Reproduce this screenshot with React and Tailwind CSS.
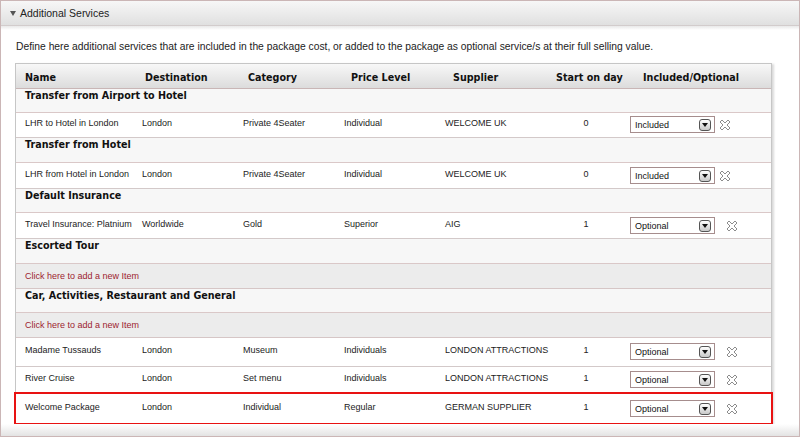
import React from "react";

const rows = [
  { type: "group", title: "Transfer from Airport to Hotel", h: "h-[24px]" },
  { type: "item", name: "LHR to Hotel in London", dest: "London", cat: "Private 4Seater", price: "Individual", supplier: "WELCOME UK", day: "0", mode: "Included", h: "h-[25px]", pt: "pt-[4px]" },
  { type: "group", title: "Transfer from Hotel", h: "h-[25px]" },
  { type: "item", name: "LHR from Hotel in London", dest: "London", cat: "Private 4Seater", price: "Individual", supplier: "WELCOME UK", day: "0", mode: "Included", h: "h-[26px]", pt: "pt-[5px]" },
  { type: "group", title: "Default Insurance", h: "h-[24px]" },
  { type: "item", name: "Travel Insurance: Platnium", dest: "Worldwide", cat: "Gold", price: "Superior", supplier: "AIG", day: "1", mode: "Optional", h: "h-[26px]", pt: "pt-[5px]" },
  { type: "group", title: "Escorted Tour", h: "h-[25px]" },
  { type: "add", h: "h-[25px]" },
  { type: "group", title: "Car, Activities, Restaurant and General", h: "h-[24px]" },
  { type: "add", h: "h-[25px]" },
  { type: "item", name: "Madame Tussauds", dest: "London", cat: "Museum", price: "Individuals", supplier: "LONDON ATTRACTIONS", day: "1", mode: "Optional", h: "h-[29px]", pt: "pt-[6px]" },
  { type: "item", name: "River Cruise", dest: "London", cat: "Set menu", price: "Individuals", supplier: "LONDON ATTRACTIONS", day: "1", mode: "Optional", h: "h-[27px]", pt: "pt-[5px]" },
  { type: "item", name: "Welcome Package", dest: "London", cat: "Individual", price: "Regular", supplier: "GERMAN SUPPLIER", day: "1", mode: "Optional", h: "h-[29px]", pt: "pt-[7px]", last: true },
];

const boldFont = "font-['DejaVu_Sans',Verdana,sans-serif] text-[9.6px] font-bold";

function RemoveIcon() {
  return (
    <svg width="12" height="12" viewBox="0 0 12 12" className="shrink-0">
      <polygon
        points="1,3 3,1 6,4 9,1 11,3 8,6 11,9 9,11 6,8 3,11 1,9 4,6"
        fill="#ffffff"
        stroke="#8c8c8c"
        strokeWidth="1"
        strokeLinejoin="round"
      />
    </svg>
  );
}

function SelectBox({ value }) {
  return (
    <div className="flex h-[17px] w-[85px] shrink-0 items-center justify-between border border-[#a68d8d] bg-white pl-[4px] pr-[3px]">
      <span className="text-[9px] leading-[12px] text-[#111]">{value}</span>
      <span className="flex h-[12px] w-[12px] items-center justify-center rounded-[3px] border border-[#555] bg-gradient-to-b from-white to-[#c8c8c8]">
        <svg width="6" height="4" viewBox="0 0 6 4">
          <polygon points="0,0 6,0 3,4" fill="#111" />
        </svg>
      </span>
    </div>
  );
}

function ItemRow({ row }) {
  return (
    <div
      className={`flex items-start bg-white ${row.h} ${row.pt} ${
        row.last ? "outline-2 outline-[#e81212]" : "border-b border-[#d3c9c9]"
      } text-[9px] leading-[12px] text-[#222]`}
    >
      <div className="w-[126px] shrink-0 whitespace-nowrap pl-[9px]">{row.name}</div>
      <div className="w-[101px] shrink-0">{row.dest}</div>
      <div className="w-[101px] shrink-0">{row.cat}</div>
      <div className="w-[101px] shrink-0">{row.price}</div>
      <div className="w-[110px] shrink-0 whitespace-nowrap">{row.supplier}</div>
      <div className="w-[62px] shrink-0 text-center">{row.day}</div>
      <div className="-mt-[1px] flex flex-1 items-center pl-[13px]">
        <SelectBox value={row.mode} />
        <span className={row.mode === "Included" ? "ml-[4px]" : "ml-[11px]"}>
          <RemoveIcon />
        </span>
      </div>
    </div>
  );
}

export default function App() {
  return (
    <div className="h-[437px] w-[800px] overflow-hidden bg-white font-['Liberation_Sans',Arial,sans-serif]">
      <div className="flex h-full flex-col border border-[#cbb6b6]">
        {/* Panel header */}
        <div className="flex h-[25px] shrink-0 items-center border-b border-[#d2cccc] bg-gradient-to-b from-[#f7f7f7] to-[#e0e0e0] pl-[9px] pt-[1px]">
          <svg width="6" height="5" viewBox="0 0 6 5" className="mr-[4px]">
            <polygon points="0,0 6,0 3,5" fill="#555" />
          </svg>
          <span className="text-[10.5px] text-[#222]">Additional Services</span>
        </div>
        <div className="h-[4px] shrink-0 bg-gradient-to-b from-[#e9e9e9] to-white" />

        <p className="mt-[10px] pl-[15px] text-[10.3px] leading-[14px] text-[#222]">
          Define here additional services that are included in the package cost, or added to the package as optional service/s at their full selling value.
        </p>

        {/* Services table */}
        <div className="ml-[14px] mt-[9px] w-[757px] shrink-0 border border-[#c6c6c6] shadow-[2px_1px_2px_rgba(0,0,0,0.15)]">
          <div className={`flex h-[25px] items-center border-b border-[#c9b6b6] bg-gradient-to-b from-[#f8f8f8] to-[#dcdcdc] pt-[4px] ${boldFont} text-[#111]`}>
            <div className="w-[126px] shrink-0 pl-[9px]">Name</div>
            <div className="w-[101px] shrink-0 pl-[3px]">Destination</div>
            <div className="w-[101px] shrink-0 pl-[5px]">Category</div>
            <div className="w-[101px] shrink-0 pl-[7px]">Price Level</div>
            <div className="w-[110px] shrink-0 pl-[8px]">Supplier</div>
            <div className="w-[62px] shrink-0 whitespace-nowrap pl-[1px]">Start on day</div>
            <div className="flex-1 whitespace-nowrap pl-[26px]">Included/Optional</div>
          </div>

          {rows.map((row, i) => {
            if (row.type === "group") {
              return (
                <div key={i} className={`${row.h} border-b border-[#dac8c8] bg-[#f7f7f7] pl-[9px] pt-[1px] ${boldFont} leading-[12px] text-[#111]`}>
                  {row.title}
                </div>
              );
            }
            if (row.type === "add") {
              return (
                <div key={i} className={`${row.h} flex items-center border-b border-[#d6c6c6] bg-[#ececec] pl-[9px] pt-[2px] text-[9px] text-[#9c1c30]`}>
                  Click here to add a new Item
                </div>
              );
            }
            return <ItemRow key={i} row={row} />;
          })}
        </div>

        <div className="flex-1 bg-gradient-to-b from-white to-[#e3e3e3]" />
      </div>
    </div>
  );
}
